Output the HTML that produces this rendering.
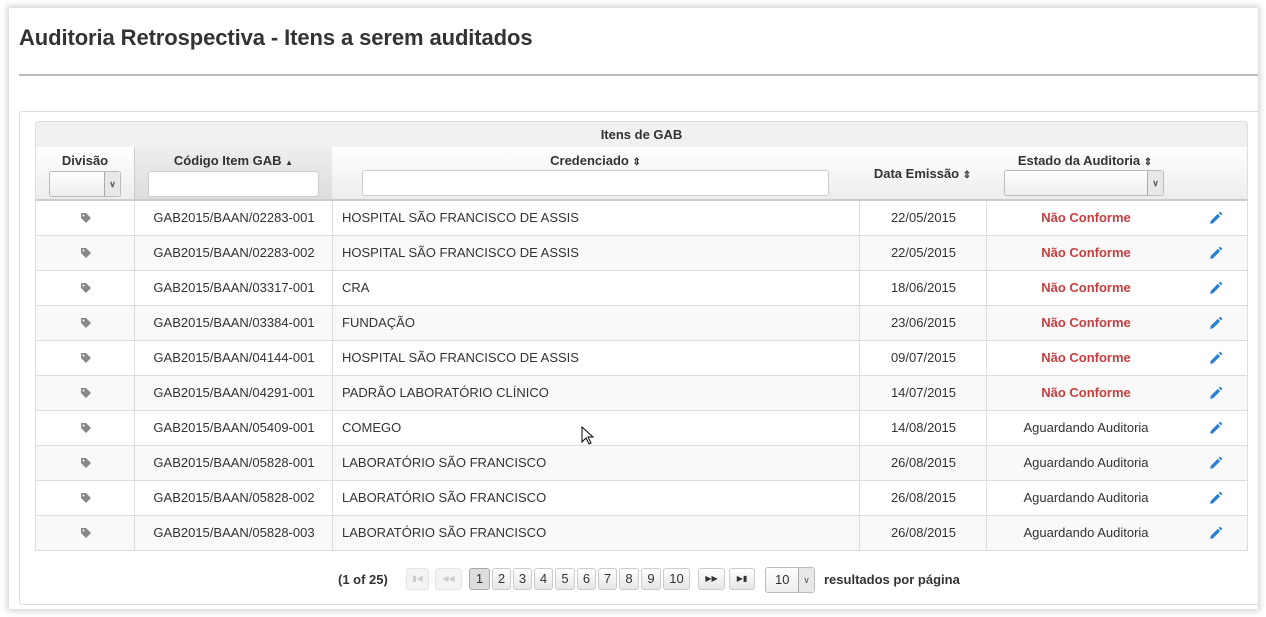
<!DOCTYPE html>
<html><head><meta charset="utf-8"><style>
*{box-sizing:border-box;margin:0;padding:0}
body{width:1266px;height:617px;background:#fff;font-family:"Liberation Sans",Arial,sans-serif;position:relative;overflow:hidden;color:#333}
.card{position:absolute;left:9px;top:8px;width:1249px;height:601px;background:#fff;box-shadow:0 0 6px 2px rgba(0,0,0,.18);overflow:hidden}
h1{position:absolute;left:19px;top:25px;font-size:22px;font-weight:bold;color:#333;letter-spacing:-0.1px}
.hr{position:absolute;left:19px;top:74px;width:1239px;height:2px;background:#bbb}
.panel{position:absolute;left:10px;top:103px;width:1250px;height:494px;border:1px solid #ddd;border-radius:3px}
.a{position:absolute}
.cap{position:absolute;left:35px;top:121px;width:1213px;height:27px;background:#f1f1f1;border:1px solid #ddd;border-radius:4px 4px 0 0;text-align:center;font-weight:bold;font-size:13px;line-height:26px}
.hd{position:absolute;top:147px;height:54px;background:linear-gradient(#fff,#ededed);border-right:1px solid #ddd;border-bottom:2px solid #ccc;font-weight:bold;font-size:13px;text-align:center}
.inp{position:absolute;height:26px;background:#fff;border:1px solid #ccc;border-radius:3px}
.sel{position:absolute;height:26px;background:linear-gradient(#fff,#eee);border:1px solid #bbb;border-radius:3px}
.sel i{position:absolute;right:0;top:0;width:16px;height:24px;border-left:1px solid #aaa;background:#e8e8e8;font-style:normal;font-size:9px;line-height:24px;color:#555;text-align:center}
.row{position:absolute;left:35px;width:1213px;height:35px;border-bottom:1px solid #ddd;border-left:1px solid #ddd;border-right:1px solid #ddd;font-size:13px;line-height:34px}
.row span{position:absolute;top:0}
.row .c{text-align:center}
.nc{color:#c44040;font-weight:bold}
.vl{position:absolute;top:0;width:1px;height:35px;background:#ddd}
.pb{position:absolute;top:568px;height:22px;border:1px solid #ccc;border-radius:3px;background:linear-gradient(#fff,#e6e6e6);font-size:13px;text-align:center;line-height:20px;color:#333}
</style></head><body>
<div class="card"><div class="panel"></div></div>
<h1>Auditoria Retrospectiva - Itens a serem auditados</h1>
<div class="hr"></div>
<div class="cap">Itens de GAB</div>
<div class="hd" style="left:35px;width:100px;border-left:1px solid #ddd"><div style="margin-top:6px">Divisão</div><div class="sel" style="left:13px;top:24px;width:72px"><i>&#8744;</i></div></div>
<div class="hd" style="left:134px;width:199px;background:linear-gradient(#eee,#ddd);border-left:1px solid #ccc"><div style="margin-top:6px">Código Item GAB <span style="font-size:8px">&#9650;</span></div><div class="inp" style="left:13px;top:24px;width:171px"></div></div>
<div class="hd" style="left:332px;width:528px"><div style="margin-top:6px">Credenciado <span style="font-size:10px">&#8661;</span></div><div class="inp" style="left:30px;top:23px;width:467px"></div></div>
<div class="hd" style="left:859px;width:128px;line-height:54px">Data Emissão <span style="font-size:10px">&#8661;</span></div>
<div class="hd" style="left:986px;width:199px"><div style="margin-top:6px">Estado da Auditoria <span style="font-size:10px">&#8661;</span></div><div class="sel" style="left:18px;top:23px;width:160px"><i>&#8744;</i></div></div>
<div class="hd" style="left:1184px;width:64px;border-right:1px solid #ddd"></div>

<div id="rows"></div>
<script>
var d=[["02283-001","HOSPITAL SÃO FRANCISCO DE ASSIS","22/05/2015",1],["02283-002","HOSPITAL SÃO FRANCISCO DE ASSIS","22/05/2015",1],["03317-001","CRA","18/06/2015",1],["03384-001","FUNDAÇÃO","23/06/2015",1],["04144-001","HOSPITAL SÃO FRANCISCO DE ASSIS","09/07/2015",1],["04291-001","PADRÃO LABORATÓRIO CLÍNICO","14/07/2015",1],["05409-001","COMEGO","14/08/2015",0],["05828-001","LABORATÓRIO SÃO FRANCISCO","26/08/2015",0],["05828-002","LABORATÓRIO SÃO FRANCISCO","26/08/2015",0],["05828-003","LABORATÓRIO SÃO FRANCISCO","26/08/2015",0]];
var tops=[201,236,271,306,341,376,411,446,481,516],h="";
var tag='<svg width="12" height="12" viewBox="0 0 12 12"><path d="M1 1h5l5 5-5 5-5-5z" fill="#888"/><circle cx="3.5" cy="3.5" r="1" fill="#fff"/></svg>';
var pen='<svg width="14" height="14" viewBox="0 0 12 12"><path d="M1.5 8.5l6-6 2 2-6 6-2.5.5z" fill="#2a7fd4"/><path d="M8.3 1.7l1.2-1.2 2 2-1.2 1.2z" fill="#2a7fd4"/></svg>';
d.forEach(function(r,i){h+='<div class="row" style="top:'+tops[i]+'px;background:'+(i%2?'#f9f9f9':'#fff')+'">'+
'<span class="c" style="left:0;width:99px;line-height:0;top:11px">'+tag+'</span>'+
'<div class="vl" style="left:98px"></div><span class="c" style="left:99px;width:198px">GAB2015/BAAN/'+r[0]+'</span>'+
'<div class="vl" style="left:296px"></div><span style="left:306px">'+r[1]+'</span>'+
'<div class="vl" style="left:823px"></div><span class="c" style="left:824px;width:127px">'+r[2]+'</span>'+
'<div class="vl" style="left:950px"></div><span class="c'+(r[3]?' nc':'')+'" style="left:951px;width:198px">'+(r[3]?'Não Conforme':'Aguardando Auditoria')+'</span>'+
'<span style="left:1173px;line-height:0;top:10px">'+pen+'</span></div>';});
document.getElementById('rows').innerHTML=h;
</script>
<div class="a" style="left:338px;top:572px;font-size:13px;font-weight:bold">(1 of 25)</div>
<div class="pb" style="left:406px;width:23px;color:#ccc;font-size:8px;border-color:#e4e4e4;background:#f4f4f4">&#9646;&#9664;</div>
<div class="pb" style="left:435px;width:27px;color:#ccc;font-size:8px;border-color:#e4e4e4;background:#f4f4f4">&#9664;&#9664;</div>
<div class="pb" style="left:469px;width:21px;background:#ddd;border-color:#aaa">1</div>
<div class="pb" style="left:492px;width:19px">2</div>
<div class="pb" style="left:513px;width:19px">3</div>
<div class="pb" style="left:534px;width:19px">4</div>
<div class="pb" style="left:555px;width:20px">5</div>
<div class="pb" style="left:577px;width:19px">6</div>
<div class="pb" style="left:598px;width:19px">7</div>
<div class="pb" style="left:619px;width:20px">8</div>
<div class="pb" style="left:641px;width:20px">9</div>
<div class="pb" style="left:663px;width:27px">10</div>
<div class="pb" style="left:698px;width:27px;font-size:8px">&#9654;&#9654;</div>
<div class="pb" style="left:729px;width:26px;font-size:8px">&#9654;&#9646;</div>
<div class="sel" style="left:765px;top:567px;width:50px;height:26px;font-size:13px;line-height:24px;padding-left:9px">10<i>&#8744;</i></div>
<div class="a" style="left:824px;top:572px;font-size:13px;font-weight:bold">resultados por página</div>
<svg class="a" style="left:581px;top:426px" width="13" height="20" viewBox="0 0 13 20"><path d="M1 1v15l4-4 3 6 2-1-3-6h5z" fill="#fff" stroke="#000" stroke-width="1"/></svg>
</body></html>
